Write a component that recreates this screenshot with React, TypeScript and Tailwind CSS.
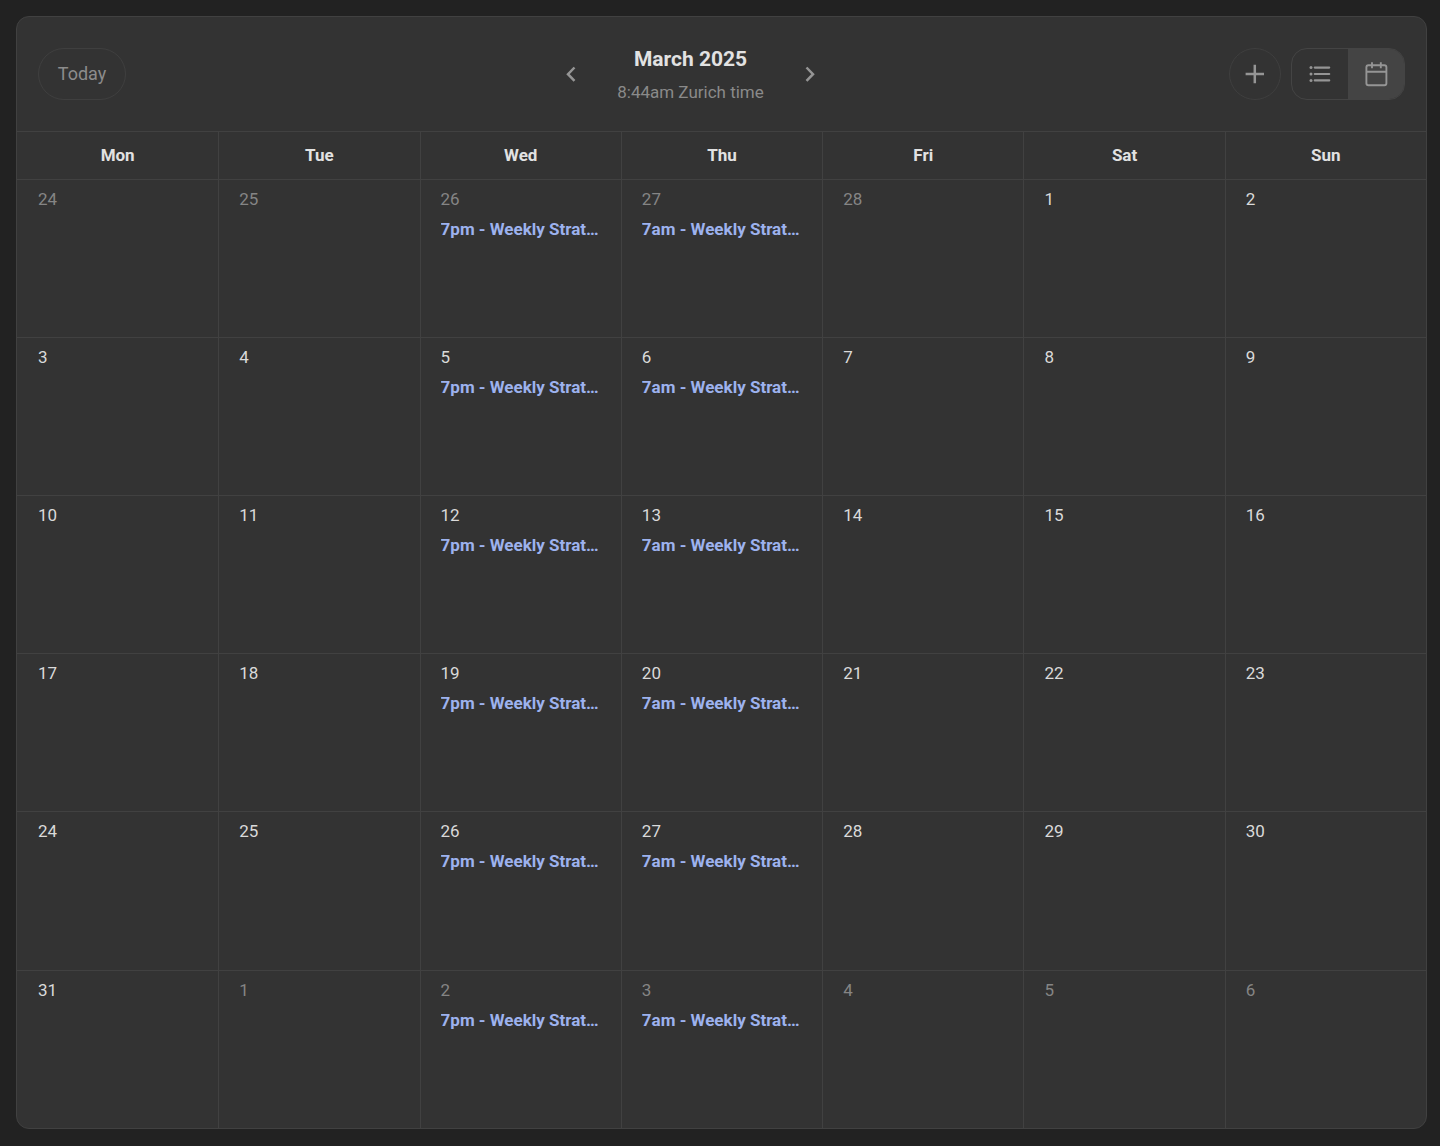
import { clsx } from "clsx";

const weekdays = ["Mon", "Tue", "Wed", "Thu", "Fri", "Sat", "Sun"];

const weeks = [
  [24, 25, 26, 27, 28, 1, 2],
  [3, 4, 5, 6, 7, 8, 9],
  [10, 11, 12, 13, 14, 15, 16],
  [17, 18, 19, 20, 21, 22, 23],
  [24, 25, 26, 27, 28, 29, 30],
  [31, 1, 2, 3, 4, 5, 6],
];

// Weekly events, keyed by column
const events: Record<number, string> = {
  2: "7pm - Weekly Strat…",
  3: "7am - Weekly Strat…",
};

const isOutside = (week: number, day: number) =>
  (week === 0 && day > 20) || (week === weeks.length - 1 && day < 20);

const Header = () => (
  <header className="flex items-center justify-between px-[21px] h-[114px]">
    <div className="w-[114px]">
      <button className="h-[52px] w-[88px] rounded-full border border-[#3f3f3f] pb-px text-[18px] text-[#8c8c8c]">
        Today
      </button>
    </div>

    <div className="flex items-center gap-[34px] text-[#959595]">
      <button aria-label="Previous month" className="p-1">
        <svg width="16" height="20" viewBox="0 0 16 20" fill="none" stroke="currentColor" strokeWidth="2.5">
          <path d="M11.5 3.5 5 10.2l6.5 6.7" />
        </svg>
      </button>
      <div className="text-center">
        <h1 className="pt-px text-[21px] leading-[30px] font-bold text-[#e2e2e2]">March 2025</h1>
        <p className="mt-1 text-[17px] leading-7 text-[#8a8a8a]">8:44am Zurich time</p>
      </div>
      <button aria-label="Next month" className="p-1">
        <svg width="16" height="20" viewBox="0 0 16 20" fill="none" stroke="currentColor" strokeWidth="2.5">
          <path d="M4.5 3.5 11 10.2l-6.5 6.7" />
        </svg>
      </button>
    </div>

    <div className="flex items-center gap-[10px] text-[#959595]">
      <button
        aria-label="New event"
        className="flex size-[52px] items-center justify-center rounded-full border border-[#3f3f3f]"
      >
        <svg width="20" height="20" viewBox="0 0 20 20" fill="none" stroke="currentColor" strokeWidth="2.5">
          <path d="M9.8 .8v18.4M.6 10h18.4" />
        </svg>
      </button>
      <div className="flex h-[52px] w-[114px] overflow-hidden rounded-2xl border border-[#444]">
        <button aria-label="List view" className="flex flex-1 items-center justify-center">
          <svg width="22" height="20" viewBox="0 0 22 20" fill="none" stroke="currentColor" strokeWidth="2.2">
            <path d="M5.8 3.6h14.4M5.8 10h14.4M5.8 16.4h14.4" strokeLinecap="round" />
            <g fill="currentColor" stroke="none">
              <circle cx="2" cy="3.6" r="1.5" />
              <circle cx="2" cy="10" r="1.5" />
              <circle cx="2" cy="16.4" r="1.5" />
            </g>
          </svg>
        </button>
        <button
          aria-label="Calendar view"
          aria-pressed="true"
          className="flex flex-1 items-center justify-center bg-[#444]"
        >
          <svg width="24" height="26" viewBox="0 0 24 26" fill="none" stroke="currentColor" strokeWidth="1.9">
            <rect x="2.4" y="4.2" width="20" height="20" rx="2" />
            <path d="M2.4 10.8h20M8 1.3v6M16.8 1.3v6" />
          </svg>
        </button>
      </div>
    </div>
  </header>
);

const DayCell = ({ day, event, outside }: { day: number; event?: string; outside: boolean }) => (
  <td className="border-t border-l border-[#414141] px-5 pt-1 align-top first:border-l-0 first:pl-[21px]">
    <div className={clsx("leading-[30px]", outside ? "text-[#858585]" : "text-[#dadada]")}>{day}</div>
    {event && (
      <a href="#event" className="block truncate leading-[30px] font-bold text-[#9db2ee]">
        {event}
      </a>
    )}
  </td>
);

export default function App() {
  return (
    <div className="min-h-screen bg-[#222] pt-4 pr-[13px] pb-[17px] pl-4 font-[Roboto,sans-serif]">
      <main className="overflow-hidden rounded-[13px] border border-[#414141] bg-[#333]">
        <Header />
        <table className="w-full table-fixed border-separate border-spacing-0 text-[17px]">
          <thead>
            <tr>
              {weekdays.map((name) => (
                <th
                  key={name}
                  scope="col"
                  className="h-12 border-t border-l border-[#414141] font-bold text-[#e2e2e2] first:border-l-0"
                >
                  {name}
                </th>
              ))}
            </tr>
          </thead>
          <tbody>
            {weeks.map((days, week) => (
              <tr key={week} className="h-[158px] nth-5:h-[159px]">
                {days.map((day, column) => (
                  <DayCell key={column} day={day} event={events[column]} outside={isOutside(week, day)} />
                ))}
              </tr>
            ))}
          </tbody>
        </table>
      </main>
    </div>
  );
}
